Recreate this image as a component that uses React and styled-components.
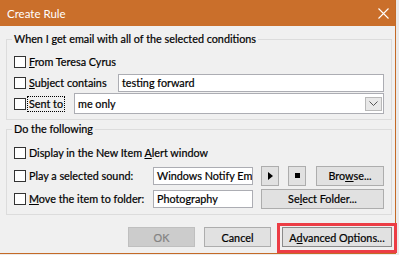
import React from 'react';
import styled, { createGlobalStyle } from 'styled-components';

const Global = createGlobalStyle`
  html, body { margin: 0; padding: 0; background: #ebebeb; }
  body {
    width: 399px; height: 255px; overflow: hidden;
    font-family: Lato, "Noto Sans", sans-serif;
    font-size: 10.8px; color: #000;
    -webkit-text-stroke: 0.2px #000;
  }
`;

const Page = styled.div`
  width: 399px;
  height: 255px;
  display: flex;
  align-items: flex-start;
`;

const Dialog = styled.div`
  width: 396px;
  height: 254px;
  box-sizing: border-box;
  border-right: 1px solid #c46a27;
  border-bottom: 1px solid #c46a27;
  background: #f0f0f0;
  display: flex;
  flex-direction: column;
`;

const TitleBar = styled.div`
  flex: none;
  height: 26px;
  background: #ca6f2b;
  color: #fff;
  -webkit-text-stroke: 0;
  font-size: 11.5px;
  display: flex;
  align-items: center;
  justify-content: space-between;
  padding: 0 6px 0 7px;
`;

const Body = styled.div`
  display: flex;
  flex-direction: column;
  padding: 13px 0 0 6px;
`;

const Group = styled.div`
  width: 386px;
  box-sizing: border-box;
  border: 1px solid #dcdcdc;
  padding: 0 7px ${p => p.$pb}px 7px;
  margin-top: ${p => p.$mt || 0}px;
  display: flex;
  flex-direction: column;
`;

const Legend = styled.div`
  align-self: flex-start;
  height: 16px;
  line-height: 16px;
  margin: -9px 0 4px -2px;
  padding: 0 2px;
  background: #f0f0f0;
`;

const Row = styled.div`
  height: ${p => p.$h}px;
  display: flex;
  align-items: center;
`;

const CheckLabel = styled.label`
  flex: none;
  display: flex;
  align-items: center;
  width: ${p => (p.$w ? `${p.$w}px` : 'auto')};
`;

const Box = styled.span`
  flex: none;
  width: 12px;
  height: 12px;
  box-sizing: border-box;
  border: 1px solid #333;
  background: #fff;
  margin-right: 1px;
`;

const LabelText = styled.span`
  border: 1px ${p => (p.$focus ? 'dotted #000' : 'solid transparent')};
  padding: 1px 1px;
  line-height: 12px;
  white-space: nowrap;
`;

const TextBox = styled.div`
  flex: none;
  width: ${p => p.$w}px;
  height: ${p => p.$h}px;
  box-sizing: border-box;
  border: 1px solid #acadb3;
  background: #fff;
  padding: 0 0 0 3px;
  display: flex;
  align-items: center;
  white-space: nowrap;
  overflow: hidden;
`;

const ComboText = styled.span`
  flex: 1;
`;

const ComboArrow = styled.span`
  flex: none;
  width: 17px;
  height: 14px;
  box-sizing: border-box;
  border: 1px solid #b9b9b9;
  background: #e8e8e8;
  margin-right: 1px;
  display: flex;
  align-items: center;
  justify-content: center;
`;

const Button = styled.div`
  flex: none;
  width: ${p => p.$w}px;
  height: 20px;
  margin-left: ${p => p.$ml || 0}px;
  box-sizing: border-box;
  border: 1px solid ${p => (p.$disabled ? '#bfbfbf' : p.$default ? '#8a8a8a' : '#adadad')};
  background: ${p => (p.$disabled ? '#cccccc' : '#e1e1e1')};
  color: ${p => (p.$disabled ? '#838383' : '#000')};
  -webkit-text-stroke-color: ${p => (p.$disabled ? '#838383' : '#000')};
  display: flex;
  align-items: center;
  justify-content: center;
  white-space: nowrap;
  position: relative;
`;

const Footer = styled.div`
  display: flex;
  justify-content: flex-end;
  padding: 12px 3px 0 0;
`;

const Highlight = styled.span`
  position: absolute;
  top: -5px;
  left: -6px;
  right: -6px;
  bottom: -7px;
  border: 3px solid #ec3d45;
  pointer-events: none;
`;

const Key = styled.u`
  text-decoration: underline;
  text-underline-offset: 1px;
`;

const Check = ({ w, focus, children }) => (
  <CheckLabel $w={w}>
    <Box />
    <LabelText $focus={focus}>{children}</LabelText>
  </CheckLabel>
);

export default function App() {
  return (
    <Page>
      <Global />
      <Dialog>
        <TitleBar>
          <span>Create Rule</span>
          <svg width="11" height="11" viewBox="0 0 11 11">
            <path d="M0.5 0.5 L10.5 10.5 M10.5 0.5 L0.5 10.5" stroke="#fff" strokeWidth="1.1" fill="none" />
          </svg>
        </TitleBar>
        <Body>
          <Group $pb={5}>
            <Legend>When I get email with all of the selected conditions</Legend>
            <Row $h={21}>
              <Check><Key>F</Key>rom Teresa Cyrus</Check>
            </Row>
            <Row $h={21}>
              <Check w={104}><Key>S</Key>ubject contains</Check>
              <TextBox $w={266} $h={18}>testing forward</TextBox>
            </Row>
            <Row $h={21}>
              <Check w={60} focus>Sent to</Check>
              <TextBox $w={310} $h={21}>
                <ComboText>me only</ComboText>
                <ComboArrow>
                  <svg width="9" height="5" viewBox="0 0 9 5">
                    <path d="M0.5 0.5 L4.5 4.5 L8.5 0.5" stroke="#555" strokeWidth="1" fill="none" />
                  </svg>
                </ComboArrow>
              </TextBox>
            </Row>
          </Group>
          <Group $pb={4} $mt={9}>
            <Legend>Do the following</Legend>
            <Row $h={23}>
              <Check>Display in the New Item <Key>A</Key>lert window</Check>
            </Row>
            <Row $h={23}>
              <Check w={139}>Play a selected sound:</Check>
              <TextBox $w={100} $h={18}>Windows Notify Em</TextBox>
              <Button $w={18} $ml={8}>
                <svg width="5" height="8" viewBox="0 0 5 8"><path d="M0 0 L5 4 L0 8 Z" fill="#000" /></svg>
              </Button>
              <Button $w={18} $ml={9}>
                <svg width="5" height="5" viewBox="0 0 5 5"><rect width="5" height="5" fill="#000" /></svg>
              </Button>
              <Button $w={68} $ml={10}>Bro<Key>w</Key>se...</Button>
            </Row>
            <Row $h={23}>
              <Check w={139}><Key>M</Key>ove the item to folder:</Check>
              <TextBox $w={100} $h={18}>Photography</TextBox>
              <Button $w={123} $ml={8}>Se<Key>l</Key>ect Folder...</Button>
            </Row>
          </Group>
        </Body>
        <Footer>
          <Button $w={67} $disabled>OK</Button>
          <Button $w={67} $ml={9}>Cancel</Button>
          <Button $w={110} $ml={11} $default>
            A<Key>d</Key>vanced Options...
            <Highlight />
          </Button>
        </Footer>
      </Dialog>
    </Page>
  );
}
